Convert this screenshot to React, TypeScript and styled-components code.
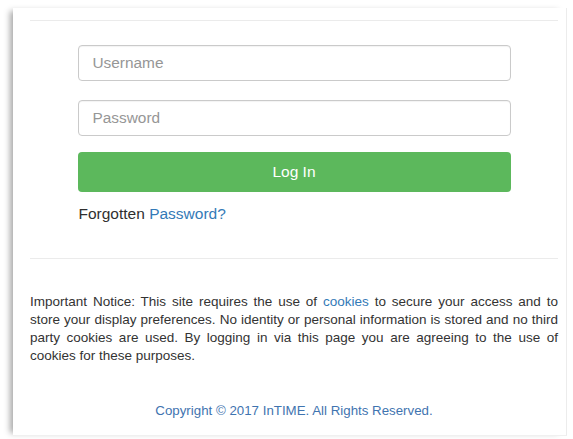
import * as React from 'react'
import styled, { createGlobalStyle } from 'styled-components'

const GlobalStyle = createGlobalStyle`
  html, body {
    margin: 0;
    padding: 0;
    background: #fff;
    font-family: "Liberation Sans", Arial, sans-serif;
    color: #333;
  }
`

const Page = styled.div`
  width: 573px;
  height: 439px;
  overflow: hidden;
  padding: 8px 0 0 13px;
  box-sizing: border-box;
`

const Panel = styled.div`
  width: 554px;
  box-sizing: border-box;
  padding: 12px 8px 15px 17px;
  background: #fff;
  border-right: 1px solid #ececec;
  border-bottom: 1px solid #f0f0f0;
  box-shadow: -6px 0 6px -3px rgba(0, 0, 0, 0.34);
`

const Rule = styled.hr<{ $gap?: number }>`
  margin: ${(p) => p.$gap ?? 0}px 0 0;
  border: 0;
  border-top: 1px solid #ebebeb;
  height: 0;
`

const Form = styled.form`
  width: 433px;
  margin: 24px auto 0;
  display: flex;
  flex-direction: column;
`

const Field = styled.input<{ $gap: number }>`
  height: 36px;
  box-sizing: border-box;
  margin: 0 0 ${(p) => p.$gap}px;
  padding: 0 14px;
  border: 1px solid #cacaca;
  border-radius: 4px;
  font-family: inherit;
  font-size: 15.4px;
  color: #555;
  background: #fff;
  box-shadow: inset 0 1px 1px rgba(0, 0, 0, 0.05);
  outline: none;

  &::placeholder {
    color: #969696;
  }
`

const LoginButton = styled.button`
  height: 40px;
  border: 0;
  border-radius: 4px;
  background: #5cb85c;
  color: #fff;
  font-family: inherit;
  font-size: 15.5px;
  cursor: pointer;
`

const Forgotten = styled.div`
  margin-top: 11px;
  padding-left: 1px;
  font-size: 15.5px;
  line-height: 21px;
  color: #2f2f2f;
`

const Link = styled.a`
  color: #337ab7;
  text-decoration: none;
`

const Notice = styled.p`
  margin: 34px 0 0;
  font-size: 13.5px;
  line-height: 18px;
  text-align: justify;
  color: #333;
`

const Copyright = styled.div`
  margin-top: 37px;
  text-align: center;
  font-size: 13.3px;
  line-height: 18px;
  color: #3f74b0;
`

export default function App() {
  return (
    <>
      <GlobalStyle />
      <Page>
        <Panel>
          <Rule />
          <Form onSubmit={(e) => e.preventDefault()}>
            <Field $gap={19} type="text" placeholder="Username" />
            <Field $gap={16} type="password" placeholder="Password" />
            <LoginButton type="submit">Log In</LoginButton>
            <Forgotten>
              Forgotten <Link href="#">Password?</Link>
            </Forgotten>
          </Form>
          <Rule $gap={34} />
          <Notice>
            Important Notice: This site requires the use of <Link href="#">cookies</Link> to secure
            your access and to store your display preferences. No identity or personal information
            is stored and no third party cookies are used. By logging in via this page you are
            agreeing to the use of cookies for these purposes.
          </Notice>
          <Copyright>Copyright © 2017 InTIME. All Rights Reserved.</Copyright>
        </Panel>
      </Page>
    </>
  )
}
